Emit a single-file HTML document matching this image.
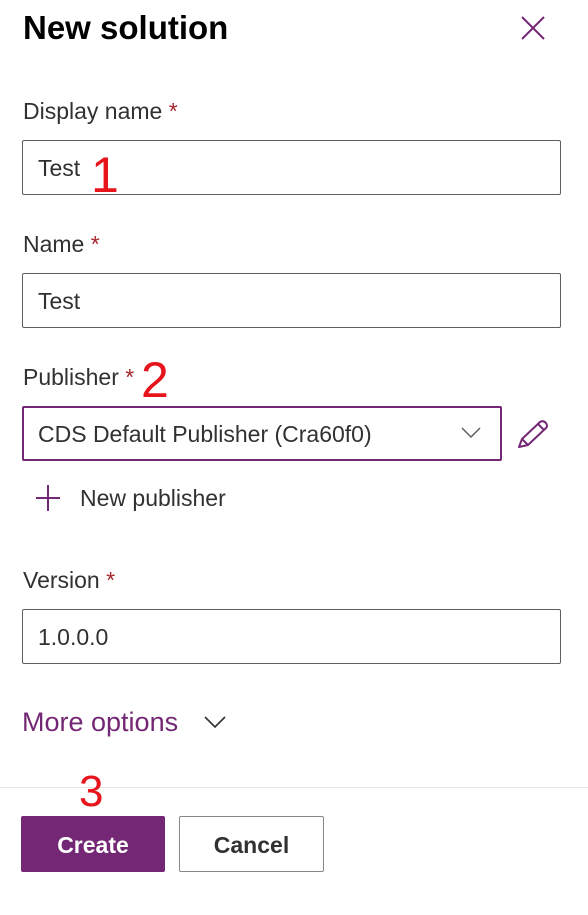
<!DOCTYPE html>
<html><head><meta charset="utf-8"><style>
*{margin:0;padding:0;box-sizing:border-box}
body{width:588px;height:915px;background:#fff;font-family:"Liberation Sans",sans-serif;position:relative;overflow:hidden;color:#323130}
.a{position:absolute;white-space:nowrap}
.lbl{font-size:23px;color:#323130;line-height:26px}
.lbl span{color:#a4262c}
.inp{position:absolute;left:22px;width:539px;height:55px;border:1px solid #605e5c;border-radius:2px;font-size:23px;line-height:55px;padding-left:15px;color:#323130}
.red{color:#e8141c;font-size:50px;line-height:50px}
</style></head><body>
<div class="a" style="left:23px;top:9px;font-size:33px;font-weight:bold;color:#000;line-height:38px">New solution</div>
<svg class="a" style="left:520px;top:15px" width="26" height="26" viewBox="0 0 26 26"><path d="M2 2L24 24M24 2L2 24" stroke="#742774" stroke-width="2"/></svg>

<div class="a lbl" style="left:23px;top:98px">Display name <span>*</span></div>
<div class="inp" style="top:140px">Test</div>
<div class="a red" style="left:91px;top:150px">1</div>

<div class="a lbl" style="left:23px;top:231px">Name <span>*</span></div>
<div class="inp" style="top:273px">Test</div>

<div class="a lbl" style="left:23px;top:364px">Publisher <span>*</span></div>
<div class="a red" style="left:141px;top:355px">2</div>
<div class="inp" style="top:406px;width:480px;border:2px solid #742774;line-height:53px;padding-left:14px">CDS Default Publisher (Cra60f0)</div>
<svg class="a" style="left:461px;top:427px" width="20" height="12" viewBox="0 0 20 12"><path d="M1 1L10 10L19 1" stroke="#605e5c" stroke-width="1.5" fill="none"/></svg>
<svg class="a" style="left:517px;top:419px" width="34" height="30" viewBox="0 0 34 30"><path d="M2 28L5 20L23 3Q26 1 29 4Q31 7 29 9L11 26Z M5 20L11 26 M21 5L27 11" stroke="#742774" stroke-width="2" fill="none" stroke-linejoin="round"/></svg>
<svg class="a" style="left:36px;top:484px" width="24" height="28" viewBox="0 0 24 28"><path d="M12 1V27M0 14H24" stroke="#742774" stroke-width="2"/></svg>
<div class="a" style="left:80px;top:485px;font-size:23px;line-height:26px;color:#323130">New publisher</div>

<div class="a lbl" style="left:23px;top:567px">Version <span>*</span></div>
<div class="inp" style="top:609px">1.0.0.0</div>

<div class="a" style="left:22px;top:707px;font-size:27px;line-height:30px;color:#742774">More options</div>
<svg class="a" style="left:204px;top:716px" width="22" height="13" viewBox="0 0 22 13"><path d="M1 1L11 11L21 1" stroke="#323130" stroke-width="1.6" fill="none"/></svg>

<div class="a" style="left:0;top:787px;width:588px;height:1px;background:#e5e5e5"></div>
<div class="a red" style="left:79px;top:770px;font-size:44px;line-height:44px">3</div>
<div class="a" style="left:21px;top:816px;width:144px;height:56px;background:#742774;border-radius:2px;color:#fff;font-weight:bold;font-size:23px;text-align:center;line-height:58px">Create</div>
<div class="a" style="left:179px;top:816px;width:145px;height:56px;border:1px solid #8a8886;border-radius:2px;color:#323130;font-weight:bold;font-size:23px;text-align:center;line-height:56px">Cancel</div>
</body></html>
